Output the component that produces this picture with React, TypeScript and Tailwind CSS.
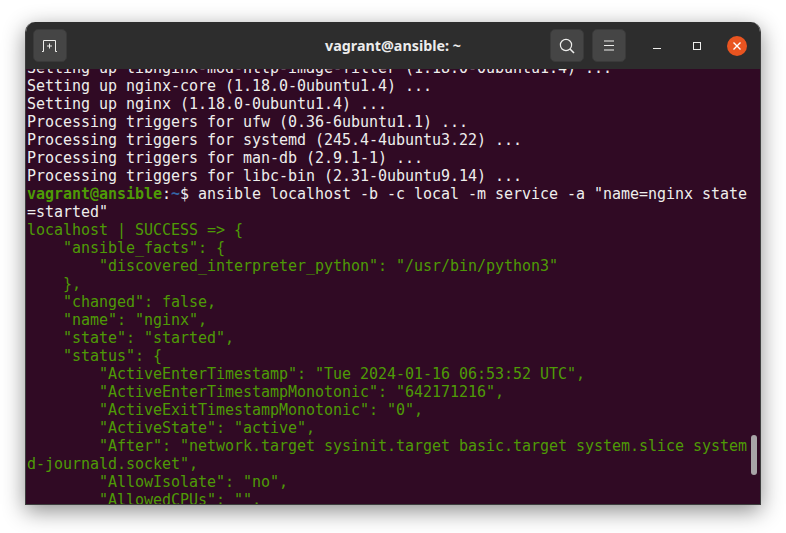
const white = [
    'Setting up libnginx-mod-http-image-filter (1.18.0-0ubuntu1.4) ...',
    'Setting up nginx-core (1.18.0-0ubuntu1.4) ...',
    'Setting up nginx (1.18.0-0ubuntu1.4) ...',
    'Processing triggers for ufw (0.36-6ubuntu1.1) ...',
    'Processing triggers for systemd (245.4-4ubuntu3.22) ...',
    'Processing triggers for man-db (2.9.1-1) ...',
    'Processing triggers for libc-bin (2.31-0ubuntu9.14) ...',
]

const green = [
    'localhost | SUCCESS => {',
    '    "ansible_facts": {',
    '        "discovered_interpreter_python": "/usr/bin/python3"',
    '    },',
    '    "changed": false,',
    '    "name": "nginx",',
    '    "state": "started",',
    '    "status": {',
    '        "ActiveEnterTimestamp": "Tue 2024-01-16 06:53:52 UTC",',
    '        "ActiveEnterTimestampMonotonic": "642171216",',
    '        "ActiveExitTimestampMonotonic": "0",',
    '        "ActiveState": "active",',
    '        "After": "network.target sysinit.target basic.target system.slice system',
    'd-journald.socket",',
    '        "AllowIsolate": "no",',
    '        "AllowedCPUs": "",',
]

function HeaderButton({ children }: { children: React.ReactNode }) {
    return (
        <div className="w-[34px] h-[33px] rounded-[5px] bg-[#454545] border border-[#3a3a3a] flex items-center justify-center">
            {children}
        </div>
    )
}

function App() {
    return (
        <div className="w-[786px] h-[533px] bg-white overflow-hidden pt-[22px] pl-[25px]">
            <div className="relative w-[736px] h-[483px] rounded-t-[10px] overflow-hidden flex flex-col shadow-[0_6px_22px_rgba(0,0,0,0.45)] border-x border-b border-[#3d3d3d]">
                <div className="h-[47px] shrink-0 bg-[#2d2d2d] grid grid-cols-[minmax(0,1fr)_auto_minmax(0,1fr)] items-center">
                    <div className="pl-[7px]">
                        <HeaderButton>
                            <svg width="18" height="14" viewBox="0 0 18 14" fill="none" stroke="#eeeeec" strokeWidth="1">
                                <path d="M1 12.5h1.5V1.5h12v11H16" />
                                <path d="M8.5 4.5v5M6 7h5" />
                            </svg>
                        </HeaderButton>
                    </div>
                    <div className="text-[14.3px] font-bold text-[#ececec] font-['Noto_Sans',sans-serif]">vagrant@ansible: ~</div>
                    <div className="flex items-center justify-end whitespace-nowrap">
                        <div className="flex gap-2 shrink-0">
                            <HeaderButton>
                                <svg width="16" height="16" viewBox="0 0 16 16" fill="none" stroke="#eeeeec" strokeWidth="1.2">
                                    <circle cx="7" cy="7" r="5.6" />
                                    <path d="M11 11l4 4" strokeWidth="1.6" />
                                </svg>
                            </HeaderButton>
                            <HeaderButton>
                                <svg width="12" height="11" viewBox="0 0 12 11" fill="none" stroke="#eeeeec" strokeWidth="1">
                                    <path d="M1 1h10M1 5.5h10M1 10h10" />
                                </svg>
                            </HeaderButton>
                        </div>
                        <div className="w-[8px] h-[1px] shrink-0 bg-[#eeeeec] ml-[27px] mt-[5px]" />
                        <div className="w-[8px] h-[8px] shrink-0 border border-[#eeeeec] ml-[32px]" />
                        <div className="w-[20px] h-[20px] shrink-0 rounded-full bg-[#e95420] ml-[26px] mr-[13px] flex items-center justify-center">
                            <svg width="8" height="8" viewBox="0 0 8 8" fill="none" stroke="#ffffff" strokeWidth="1.4">
                                <path d="M0.5 0.5l7 7M7.5 0.5l-7 7" />
                            </svg>
                        </div>
                    </div>
                </div>
                <div className="relative flex-1 overflow-hidden bg-[#300a24] pl-[1px] font-['DejaVu_Sans_Mono',monospace] text-[15px] leading-[18px] tracking-[-0.03px] whitespace-pre">
                    <div className="-mt-[10px] text-[#eeeeec]">
                        {white.map((line, i) => (
                            <div key={i}>{line}</div>
                        ))}
                        <div>
                            <span className="font-bold text-[#4e9a06]">vagrant@ansible</span>
                            <span>:</span>
                            <span className="font-bold text-[#3465a4]">~</span>
                            <span>{'$ ansible localhost -b -c local -m service -a "name=nginx state'}</span>
                        </div>
                        <div>=started"</div>
                    </div>
                    <div className="text-[#4e9a06]">
                        {green.map((line, i) => (
                            <div key={i}>{line}</div>
                        ))}
                    </div>
                    <div className="absolute top-[366px] right-[3px] w-[6px] h-[40px] rounded-full bg-[#a8a4a7]" />
                </div>
            </div>
        </div>
    )
}

export default App
